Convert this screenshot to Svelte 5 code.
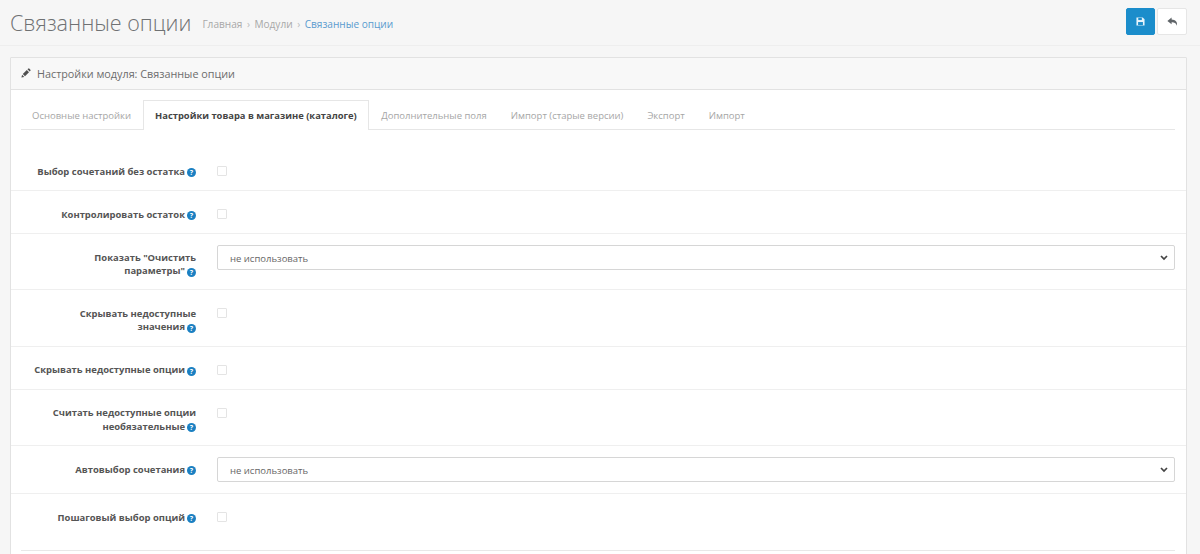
<script>
	const tabs = ['Основные настройки', 'Настройки товара в магазине (каталоге)', 'Дополнительные поля', 'Импорт (старые версии)', 'Экспорт', 'Импорт'];
	const activeTab = 1;

	const rows = [
		{ label: ['Выбор сочетаний без остатка'], type: 'check' },
		{ label: ['Контролировать остаток'], type: 'check' },
		{ label: ['Показать "Очистить', 'параметры"'], type: 'select' },
		{ label: ['Скрывать недоступные', 'значения'], type: 'check' },
		{ label: ['Скрывать недоступные опции'], type: 'check' },
		{ label: ['Считать недоступные опции', 'необязательные'], type: 'check' },
		{ label: ['Автовыбор сочетания'], type: 'select' },
		{ label: ['Пошаговый выбор опций'], type: 'check', tall: true }
	];
</script>

<div class="page">
	<header class="page-header">
		<div class="title">
			<h1>Связанные опции</h1>
			<nav class="crumbs">
				<span>Главная</span>
				<i>›</i>
				<span>Модули</span>
				<i>›</i>
				<span class="current">Связанные опции</span>
			</nav>
		</div>
		<div class="actions">
			<button class="btn primary" aria-label="Сохранить">
				<svg width="9" height="9" viewBox="0 0 10 10">
					<path fill="#e8f4fb" d="M0.500 0.500h7l2 2v7h-9z" />
					<rect x="2.500" y="1" width="4" height="2.400" fill="#1b8dcb" />
					<rect x="2.300" y="5.600" width="5.400" height="3.400" fill="#1b8dcb" />
				</svg>
			</button>
			<button class="btn" aria-label="Отмена">
				<svg width="11" height="10" viewBox="0 0 11 10">
					<path fill="#5f6468" d="M4.600 0.600 0.400 3.900l4.200 3.300V5.200c2.600-.1 4.300.6 5.300 3.600.7-3.900-1.500-6.100-5.300-6.200z" />
				</svg>
			</button>
		</div>
	</header>

	<section class="panel">
		<div class="panel-heading">
			<svg width="10" height="10" viewBox="0 0 10 10">
				<path fill="#4f4f4f" d="M0.400 9.600l.7-2.900 2.200 2.200zM1.800 6l4-4 2.200 2.200-4 4zM6.500 1.300l.7-.7c.3-.3.700-.3 1 0l1.200 1.200c.3.300.3.700 0 1l-.7.700z" />
			</svg>
			<span>Настройки модуля: Связанные опции</span>
		</div>
		<div class="panel-body">
			<ul class="tabs">
				{#each tabs as tab, i}
					<li class:active={i === activeTab}>{tab}</li>
				{/each}
			</ul>
			<div class="form">
				{#each rows as row}
					<div class="row" class:tall={row.tall}>
						<div class="label">
							{#each row.label as line, i}
								<span class="line">
									{line}{#if i === row.label.length - 1}<span class="hint">?</span>{/if}
								</span>
							{/each}
						</div>
						<div class="field">
							{#if row.type === 'check'}
								<span class="check"></span>
							{:else}
								<div class="select">
									<span class="value">не использовать</span>
									<svg width="8" height="6" viewBox="0 0 8 6">
										<path d="M1 1l3 3 3-3" fill="none" stroke="#444" stroke-width="1.700" />
									</svg>
								</div>
							{/if}
						</div>
					</div>
				{/each}
				<div class="divider"></div>
			</div>
		</div>
	</section>
</div>

<style>
	:global(body) {
		margin: 0;
		background: #f6f6f6;
		overflow: hidden;
	}

	.page {
		height: 554px;
		overflow: hidden;
		font-family: 'Open Sans', sans-serif;
		font-size: 9.500px;
		color: #666;
	}

	.page-header {
		height: 46px;
		box-sizing: border-box;
		border-bottom: 1px solid #eee;
		display: flex;
		justify-content: space-between;
		align-items: flex-start;
		padding: 8px 13px 0 10px;
	}

	.title {
		display: flex;
		align-items: center;
		gap: 10px;
	}

	h1 {
		margin: 0;
		font-size: 21.500px;
		font-weight: 300;
		line-height: 30px;
		color: #6f7173;
	}

	.crumbs {
		display: flex;
		align-items: center;
		gap: 4.500px;
		padding-top: 2px;
		margin-left: 1px;
		font-size: 10.100px;
		color: #a8a8a8;
	}

	.crumbs i {
		font-style: normal;
		color: #bbb;
	}

	.current {
		color: #5a9bcf;
	}

	.actions {
		display: flex;
		gap: 2px;
	}

	.btn {
		width: 30px;
		height: 27px;
		padding: 0;
		background: #fff;
		border: 1px solid #e6e6e6;
		border-radius: 2px;
		display: flex;
		align-items: center;
		justify-content: center;
	}

	.btn.primary {
		width: 29px;
		background: #1b8dcb;
		border-color: #1b8dcb;
	}

	.panel {
		margin: 11px 13px 0 10px;
		border: 1px solid #e2e2e2;
		border-radius: 1px;
		background: #fff;
	}

	.panel-heading {
		height: 32px;
		box-sizing: border-box;
		padding: 0 0 1px 10px;
		background: #f8f8f8;
		border-bottom: 1px solid #e2e2e2;
		display: flex;
		align-items: center;
		gap: 6px;
		font-size: 10.800px;
		color: #6c6c6c;
	}

	.panel-body {
		padding: 10px 11px 0 0;
	}

	.tabs {
		list-style: none;
		margin: 0 0 0 10px;
		padding: 0;
		height: 30px;
		box-sizing: border-box;
		border-bottom: 1px solid #e6e6e6;
		display: flex;
	}

	.tabs li {
		height: 29px;
		box-sizing: border-box;
		padding: 0 11px;
		display: flex;
		align-items: center;
		color: #a6a6a6;
		border: 1px solid transparent;
		border-bottom: 0;
		white-space: nowrap;
	}

	.tabs li:first-child {
		margin-left: -1px;
	}

	.tabs li.active {
		height: 30px;
		margin-right: 0.500px;
		background: #fff;
		border-color: #e6e6e6;
		color: #444;
		font-weight: 700;
		font-size: 9.400px;
	}

	.form {
		padding-top: 18px;
		padding-bottom: 30px;
		margin-right: -11px;
	}

	.row {
		display: flex;
		align-items: flex-start;
		padding: 11px 11px 11px 0;
		border-bottom: 1px solid #efefef;
	}

	.row.tall {
		min-height: 34px;
		border-bottom: 0;
	}

	.divider {
		margin: 0 11px 0 10px;
		border-top: 1px solid #e8e8e8;
	}

	.label {
		width: 185px;
		min-height: 20px;
		box-sizing: border-box;
		flex: none;
		display: flex;
		flex-direction: column;
		align-items: flex-end;
		font-weight: 700;
		font-size: 9.450px;
		color: #555;
		line-height: 13.500px;
		padding: 5.600px 0 0.800px;
	}

	.line {
		white-space: nowrap;
	}

	.hint {
		display: inline-block;
		width: 9px;
		height: 9px;
		margin-left: 2px;
		border-radius: 50%;
		background: #1b80c2;
		color: #fff;
		font-size: 7px;
		line-height: 9px;
		text-align: center;
		vertical-align: -0.500px;
	}

	.field {
		flex: 1;
		margin-left: 21px;
		min-width: 0;
	}

	.check {
		display: block;
		width: 8px;
		height: 8px;
		margin-top: 7px;
		border: 1px solid #e4e4e4;
		border-radius: 1px;
		background: #fff;
	}

	.select {
		height: 25px;
		box-sizing: border-box;
		padding: 0 6px 0 12px;
		border: 1px solid #d6d6d6;
		border-radius: 2px;
		display: flex;
		align-items: center;
		justify-content: space-between;
		color: #666;
	}

	.value {
		padding-top: 1px;
	}
</style>
